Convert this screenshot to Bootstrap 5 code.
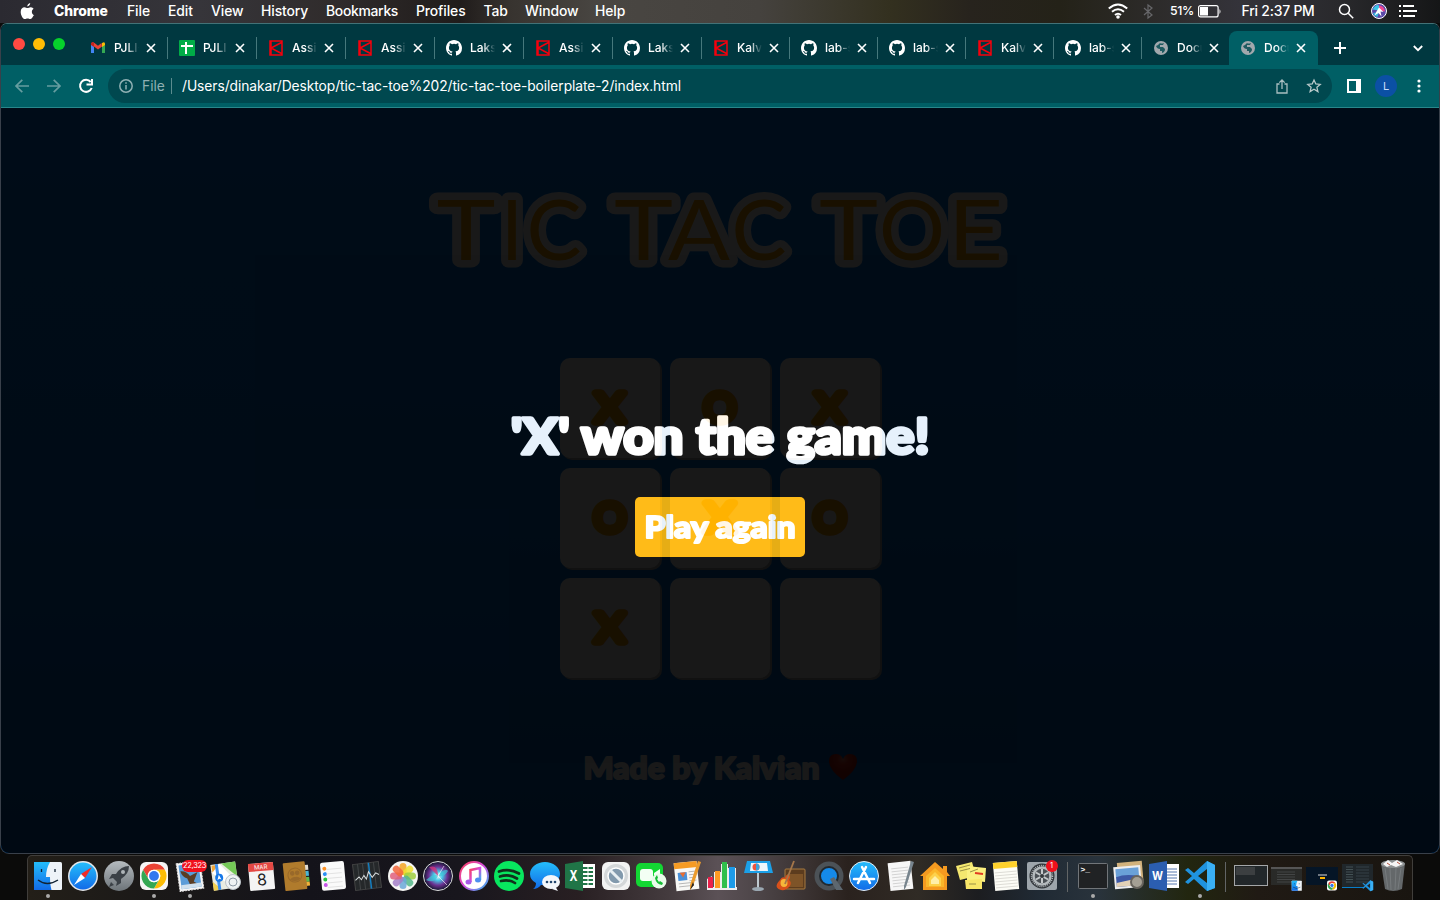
<!DOCTYPE html>
<html lang="en">
<head>
<meta charset="utf-8">
<title>Tic Tac Toe</title>
<link rel="stylesheet" href="https://cdn.jsdelivr.net/npm/bootstrap@5.3.0/dist/css/bootstrap.min.css">
<style>
body{width:1440px;height:900px;overflow:hidden;background:#0b0b0a;font-family:Inter,"Liberation Sans",sans-serif;color:#fff}
svg{display:block;flex:none;overflow:visible}
.menubar{height:23px;padding:0 0 1px 20px;font-size:13.9px;font-weight:500;line-height:22px;background:linear-gradient(90deg,#2b2a31 0,#36353a 200px,#302c2c 330px,#201c1b 460px,#37332f 510px,#494642 600px,#45423e 760px,#33301f 890px,#27231d 970px,#242218 1060px,#34333a 1240px,#29292c 1340px,#151617 1440px)}
.menubar b{font-weight:800}
.browser{height:831px;background:#000;border:1px solid #437277;border-color:#437277 #39404a #39404a;border-radius:7px 7px 9px 9px;overflow:hidden}
.tabstrip{height:41px;background:#003840;padding-left:12px}
.lights{width:66px;gap:8px;height:40px}
.lights i{width:12px;height:12px;border-radius:50%}
.tab{height:34px;margin-top:7px;padding-left:11px;font-size:12px;font-weight:500}
.tab .ttl{width:26px;margin-left:8px;overflow:hidden;white-space:nowrap;-webkit-mask-image:linear-gradient(90deg,#000 50%,transparent 96%)}
.tab .cls{margin-left:7px}
.tab.split{border-right:1px solid transparent;border-image:linear-gradient(transparent 7px,#46787c 7px,#46787c 27px,transparent 27px) 1}
.tab.on{background:#005f65;border-radius:8px 8px 0 0}
.toolbar{height:43px;background:#005f65;border-bottom:1px solid #28878b}
.omni{width:1224px;height:34px;border-radius:17px;background:#00484f;font-size:13.8px}
.vline{width:1px;height:16px;background:#5c8c8f}
.avatar-l{width:22px;height:22px;border-radius:50%;background:#0b50a4;color:#c9defa;font-size:11px;line-height:22px;text-align:center}
.page{height:745px;background:linear-gradient(#0078f0 0,#0076e0 45%,#0060c0 100%);position:relative;font-family:Lato,sans-serif;font-weight:900}
.board{display:grid;grid-template-columns:repeat(3,100px);gap:10px}
.cell{height:100px;border-radius:10px;background:#fff;box-shadow:2px 2px 0 #b4b4b4}
.veil{position:absolute;inset:0;background:#000;opacity:.9}
.again{width:170px;height:60px;border-radius:5px;background:#ffb400}
.dockbar{height:46px;margin:1px 27px 0;padding-left:2px;border:1px solid #403e3b;border-bottom:0;border-radius:5px 5px 0 0;background:linear-gradient(90deg,#231f18 0,#1b1918 120px,#14131a 280px,#18161d 430px,#281f22 550px,#443b3e 640px,#5b5156 690px,#4d4548 730px,#2a221e 820px,#302b25 890px,#1c1d20 950px,#202a34 1010px,#29333c 1070px,#22260f 1160px,#201a14 1230px,#191510 100%)}
.app{width:35.5px;height:44px;position:relative;padding-top:4px}
.app svg{width:32px;height:32px;margin-left:1.5px}
.app.run::after{content:"";position:absolute;left:15.500px;bottom:2px;width:4px;height:4px;border-radius:50%;background:#aaa}
.dsep{width:16px;height:44px;padding:6px 0 0 7px}
.dsep::before{content:"";display:block;width:1px;height:30px;background:#626566}
.pill{position:absolute;background:#f0101c;color:#fff;text-align:center;border-radius:7px;z-index:2;font-size:7.5px;line-height:12px;height:12px}
</style>
</head>
<body>
<svg width="0" height="0" class="position-absolute"><defs>
<linearGradient id="blu" x2="0" y2="1"><stop stop-color="#24bdfb"/><stop offset="1" stop-color="#126be8"/></linearGradient>
<linearGradient id="gry" x2="0" y2="1"><stop stop-color="#b5bbbf"/><stop offset="1" stop-color="#6d7479"/></linearGradient>
<linearGradient id="pnk" x2="1" y2="1"><stop stop-color="#fa4059"/><stop offset=".5" stop-color="#d44be0"/><stop offset="1" stop-color="#2ebcf0"/></linearGradient>
<radialGradient id="sir"><stop stop-color="#fff"/><stop offset=".3" stop-color="#48c9e8"/><stop offset=".65" stop-color="#6b2f91"/><stop offset="1" stop-color="#11172c"/></radialGradient>
<radialGradient id="hrt" cy=".2"><stop stop-color="#f0705c"/><stop offset=".4" stop-color="#e02a1c"/><stop offset="1" stop-color="#b8140c"/></radialGradient>
<g id="chr"><circle cx="16" cy="16" r="12.6" fill="#fff"/><path d="M5.1 9.7A12.6 12.6 0 0 1 26.9 9.7H16a6.3 6.3 0 0 0-5.5 9.4z" fill="#ea4335"/><path d="M26.9 9.7A12.6 12.6 0 0 1 16 28.6l5.5-9.4A6.3 6.3 0 0 0 16 9.7z" fill="#fbbc05"/><path d="M16 28.6A12.6 12.6 0 0 1 5.1 9.7l5.4 9.4a6.3 6.3 0 0 0 11 0z" fill="#34a853"/><circle cx="16" cy="16" r="6.2" fill="#fff"/><circle cx="16" cy="16" r="4.9" fill="#3478ee"/></g>
<g id="fnd"><rect x="2" y="2" width="28" height="28" rx="1.5" fill="#eef3f8"/><path d="M2 2h16q-4 7-4 15h4q0 8 1.5 13H2z" fill="url(#blu)"/><path d="M6 20q9 7 20 0M9.500 9v3M23 9v3" fill="none" stroke="#123" stroke-width="1.3"/></g>
<g id="vsc"><path d="M23 1l8 4v23l-8 3L10 19l-6 5-3-2 7-6-7-6 3-2 6 5zM23 9l-9 7 9 7z" fill="#1f93df"/><path d="M23 1l8 4v23l-8 3z" fill="#3ab0f5"/></g>
<symbol id="gh" viewBox="0 0 16 16"><path fill="#fff" d="M8 0C3.58 0 0 3.58 0 8c0 3.54 2.29 6.53 5.47 7.59.4.07.55-.17.55-.38 0-.19-.01-.82-.01-1.49-2.01.37-2.53-.49-2.69-.94-.09-.23-.48-.94-.82-1.13-.28-.15-.68-.52-.01-.53.63-.01 1.08.58 1.23.82.72 1.21 1.87.87 2.33.66.07-.52.28-.87.51-1.07-1.78-.2-3.64-.89-3.64-3.95 0-.87.31-1.59.82-2.15-.08-.2-.36-1.02.08-2.12 0 0 .67-.21 2.2.82a7.500 7.500 0 0 1 4 0c1.530-1.040 2.200-.82 2.200-.82.44 1.100.16 1.920.08 2.120.51.56.82 1.270.82 2.150 0 3.070-1.870 3.750-3.650 3.950.29.25.54.73.54 1.480 0 1.070-.01 1.930-.01 2.200 0 .21.15.46.55.38A8.010 8.010 0 0 0 16 8c0-4.420-3.580-8-8-8z"/></symbol>
<symbol id="kv" viewBox="0 0 16 16"><path d="M2 1h12v14H2zM13.500 2.500L3 8l10.500 5.500M3 1v14" fill="none" stroke="#f5000c" stroke-width="1.500"/></symbol>
<symbol id="gm" viewBox="0 0 16 16"><path d="M1 4v9h3V6z" fill="#4285f4"/><path d="M12 6v7h3V4z" fill="#34a853"/><path d="M1 4q1-3 3.500-1L8 5.700 11.500 3 12 6.500 8 9.600 4 6.500z" fill="#ea4335"/><path d="M1 4q0-2 2-2l1 1v4L1 5z" fill="#c5221f"/><path d="M12 3q3-2 3 1v1l-3 2z" fill="#fbbc04"/></symbol>
<symbol id="sh" viewBox="0 0 16 16"><rect width="16" height="16" rx="1" fill="#00ac47"/><path d="M6 2h2v12H6zM2 5h12v2H2z" fill="#fff"/></symbol>
<symbol id="gl" viewBox="0 0 16 16"><circle cx="8" cy="8" r="7" fill="#a1a8ad"/><path d="M3 6q1 3 4 3v2h2v2q3-1 3-4l-2-2H7V5h3l1-2q-3 1-4 0L5 5z" fill="#1d5a60"/></symbol>
</defs></svg>

<header class="menubar d-flex align-items-center text-nowrap">
<svg width="15" height="17" viewBox="0 0 15 17" style="margin-right:19px"><path fill="#fff" d="M10.200 0c.1 1.700-1.300 3.300-2.900 3.400C7.200 1.800 8.600.2 10.200 0zM13.500 12.500c-.8 1.800-2 3.500-3.200 3.500s-1.500-.6-2.700-.6-1.600.6-2.700.6C2.800 16 .7 12 .7 8.900.7 5.900 2.500 4.300 4.500 4.300c1.200 0 2.200.8 3 .8s2-.9 3.400-.8c1.300.1 2.100.6 2.700 1.500-2.600 1.700-2.200 5.500.7 6.600z"/></svg>
<div id="menus" class="d-flex"></div>
<div class="d-flex align-items-center ms-auto" style="width:332px">
<svg width="20" height="16" viewBox="0 0 20 16" fill="none" stroke="#fff" stroke-width="2"><path d="M.8 5.500Q10-2.500 19.200 5.500M4 8.800q6-5 12 0M7 12q3-2.500 6 0"/><circle cx="10" cy="14" r=".8" fill="#fff"/></svg>
<svg width="10" height="15" viewBox="0 0 10 15" style="margin-left:15px" fill="none" stroke="#67676a" stroke-width="1.200"><path d="M1 4l8 7-4 3V1l4 3-8 7"/></svg>
<span style="margin-left:17px;font-size:12.300px;width:28px;letter-spacing:-.4px">51%</span>
<svg width="24" height="13" viewBox="0 0 24 13"><rect x=".6" y=".6" width="19.500" height="11.300" rx="2" fill="none" stroke="#fff" stroke-width="1.200"/><rect x="2" y="2" width="8" height="8.500" fill="#fff"/><path d="M21.500 4q2 2.300 0 5z" fill="#fff"/></svg>
<span style="margin-left:19.500px;width:96px;letter-spacing:-.2px">Fri 2:37 PM</span>
<svg width="16" height="16" viewBox="0 0 16 16" fill="none" stroke="#fff" stroke-width="1.500"><circle cx="6.500" cy="6.500" r="5"/><path d="M10.200 10.200l5 5"/></svg>
<svg width="16" height="16" viewBox="0 0 32 32" style="margin-left:17px"><circle cx="16" cy="16" r="15" fill="#5b49a8" stroke="#fff" stroke-width="2"/><path d="M3 13q7-12 13-8v10z" fill="#3bc6e8"/><path d="M16 5q10 0 12 12l-12-2z" fill="#ee4692"/><path d="M4 20q2 7 9 8l3-10z" fill="#35b6dc"/><path d="M16 9l9 9-6-1 2 10-6-7-8 5 4-8z" fill="#fff"/></svg>
<svg width="18" height="12" viewBox="0 0 18 12" style="margin-left:12px" stroke="#fff" stroke-width="1.800"><path d="M0 1h2M4 1h11M0 6h2M4 6h14M0 11h2M4 11h12"/></svg>
</div>
</header>

<main class="browser">
<div class="tabstrip d-flex">
<div class="lights d-flex align-items-center"><i style="background:#ff4a42"></i><i style="background:#ffbd05"></i><i style="background:#06d32c"></i></div>
<div id="tabs" class="d-flex"></div>
<svg width="12" height="12" viewBox="0 0 12 12" style="margin:18px 0 0 16px" stroke="#fff" stroke-width="2"><path d="M6 0v12M0 6h12"/></svg>
<svg class="ms-auto" width="10" height="7" viewBox="0 0 10 7" style="margin:21px 16px 0 0" fill="none" stroke="#fff" stroke-width="1.800"><path d="M.8 1L5 5.200 9.200 1"/></svg>
</div>
<div class="toolbar d-flex align-items-center">
<svg width="14" height="14" viewBox="0 0 14 14" style="margin-left:14px" fill="none" stroke="#669da0" stroke-width="1.700"><path d="M14 7H1M7.300.8L1 7l6.300 6.200"/></svg>
<svg width="14" height="14" viewBox="0 0 14 14" style="margin-left:18px" fill="none" stroke="#669da0" stroke-width="1.700"><path d="M0 7h13M6.700.8L13 7l-6.300 6.200"/></svg>
<svg width="14" height="14" viewBox="0 0 14 14" style="margin:0 15px 0 18px" fill="none" stroke="#fff" stroke-width="2"><path d="M11.700 3A6 6 0 1 0 12.700 9M13 0v5.500H7.500"/></svg>
<div class="omni d-flex align-items-center">
<svg width="14" height="14" viewBox="0 0 14 14" style="margin-left:11px" fill="none" stroke="#8fb0b3" stroke-width="1.500"><circle cx="7" cy="7" r="6.200"/><path d="M7 6v4.500M7 3.200v1.500"/></svg>
<span style="margin-left:9px;width:29px;color:#8fb0b3">File</span><span class="vline"></span>
<svg width="500" height="20" viewBox="0 0 500 20" style="margin-left:10px"><text x="0" y="14.500" font-size="13.800" fill="#fff" textLength="499">/Users/dinakar/Desktop/tic-tac-toe%202/tic-tac-toe-boilerplate-2/index.html</text></svg>
<svg class="ms-auto" width="12" height="15" viewBox="0 0 12 15" fill="none" stroke="#a9bfc1" stroke-width="1.300"><path d="M3.500 5H1v9h10V5H8.500M6 10V1M3.300 3.600L6 1l2.700 2.600"/></svg>
<svg width="14" height="14" viewBox="0 0 14 14" style="margin:0 11px 0 19px" fill="none" stroke="#b8c9ca" stroke-width="1.300"><path d="M7 1l1.800 4 4.400.4-3.300 2.900 1 4.300L7 10.300l-3.900 2.300 1-4.300L.8 5.400l4.400-.4z"/></svg>
</div>
<svg width="14" height="14" viewBox="0 0 14 14" style="margin-left:15px"><path fill="#fff" d="M0 0h14v14H0zM2 2v10h7V2z" fill-rule="evenodd"/></svg>
<div class="avatar-l" style="margin-left:14px">L</div>
<svg width="4" height="14" viewBox="0 0 4 14" style="margin-left:19.500px" fill="#fff"><circle cx="2" cy="2" r="1.600"/><circle cx="2" cy="7" r="1.600"/><circle cx="2" cy="12" r="1.600"/></svg>
</div>
<section class="page">
<div class="d-flex flex-column align-items-center">
<svg width="600" height="100" viewBox="420 180 600 100" style="margin-top:72px"><text id="title" y="260" font-size="83" font-weight="400" fill="#ffa500" stroke="#fff" stroke-width="15" stroke-linejoin="round" paint-order="stroke"></text></svg>
<div class="board" style="margin-top:78px" id="board"></div>
<svg width="280" height="50" viewBox="580 745 280 50" style="margin-top:67px"><text x="583.500" y="779" font-size="31" fill="#fff" stroke="#fff" stroke-width="2" stroke-linejoin="round" textLength="236" lengthAdjust="spacingAndGlyphs">Made by Kalvian</text><path d="M843 780q-14-10-14-19 0-7 7-7 5 0 7 5 2-5 7-5 7 0 7 7 0 9-14 19z" fill="url(#hrt)"/></svg>
</div>
<div class="veil d-flex flex-column align-items-center">
<svg width="430" height="65" viewBox="505 410 430 65" style="margin-top:302px"><text x="511" y="454" font-size="49" fill="#fff" stroke="#fff" stroke-width="3.500" stroke-linejoin="round" textLength="418.500" lengthAdjust="spacingAndGlyphs">'X' won the game!</text></svg>
<div class="again" style="margin-top:22px"><svg width="170" height="60" viewBox="635 497 170 60"><text x="644.500" y="537.500" font-size="30" fill="#fff" stroke="#fff" stroke-width="2" stroke-linejoin="round" textLength="151" lengthAdjust="spacingAndGlyphs">Play again</text></svg></div>
</div>
</section>
</main>
<footer class="dockbar d-flex" id="dock"></footer>

<script src="https://cdn.jsdelivr.net/npm/bootstrap@5.3.0/dist/js/bootstrap.bundle.min.js"></script>
<script>
const $=id=>document.getElementById(id);
$('title').innerHTML=[['T',436.5,59],['I',501,22],['C',526.5,55],['T',614,59],['A',668,62],['C',731.5,55],['T',819,59],['O',879,66],['E',948,55]].map(([c,x,w])=>`<tspan x="${x}" textLength="${w}" lengthAdjust="spacingAndGlyphs">${c}</tspan>`).join('');
$('menus').innerHTML=[['<b>Chrome</b>',73],['File',41],['Edit',43],['View',50],['History',65],['Bookmarks',90],['Profiles',67.500],['Tab',41.500],['Window',70],['Help',40]].map(([t,w])=>`<span style="width:${w}px;letter-spacing:${t=='Bookmarks'?-.3:-.1}px">${t}</span>`).join('');
$('tabs').innerHTML=[['gm','PJLI-',89],['sh','PJLI',89],['kv','Assig',89],['kv','Assig',89],['gh','Laks',89],['kv','Assig',89],['gh','Laks',89],['kv','Kalv',88],['gh','lab-s',88],['gh','lab-s',88],['kv','Kalv',88],['gh','lab-s',88],['gl','Docu',87],['gl','Docu',89]].map(([i,t,w],n)=>`<div class="tab d-flex align-items-center ${n==13?'on':n<12?'split':''}" style="width:${w}px"><svg width="16" height="16"><use href="#${i}"/></svg><span class="ttl">${t}</span><svg class="cls" width="8" height="8" viewBox="0 0 8 8" stroke="#fff" stroke-width="1.600"><path d="M0 0l8 8M8 0L0 8"/></svg></div>`).join('');
const mark=(t,w)=>`<text x="${50-w/2}" y="64" font-size="41" font-weight="400" fill="#ffa500" stroke="#ffa500" stroke-width="7.5" stroke-linejoin="round" textLength="${w}" lengthAdjust="spacingAndGlyphs">${t}</text>`;
const X=mark('X',30),O=mark('O',33);
$('board').innerHTML=[X,O,X,O,X,O,X,'',''].map(m=>`<div class="cell"><svg width="100" height="100">${m}</svg></div>`).join('');
const petals=['#f6a623','#f0e02e','#a0cf3f','#55b98a','#6ba8d8','#a580c8','#e0607c','#f3673b'].map((c,i)=>`<rect x="12.500" y="3" width="7" height="12" rx="3.500" fill="${c}" opacity=".85" transform="rotate(${i*45} 16 16)"/>`).join('');
const teeth=Array.from({length:6},(_,i)=>`<path d="M16 16V9" transform="rotate(${i*60} 16 16)" stroke="#c4c9cb" stroke-width="2"/>`).join('');
const lines=(x,y,w,n,s,c)=>Array.from({length:n},(_,i)=>`<path d="M${x} ${y+i*s}h${w}" stroke="${c}" stroke-width=".8"/>`).join('');
const apps=[
['<use href="#fnd"/>',1],
['<circle cx="16" cy="16" r="15" fill="#e5e8eb"/><circle cx="16" cy="16" r="13.500" fill="url(#blu)"/><path d="M25 7L14 14l4 4z" fill="#f02c28"/><path d="M7 25l7-11 4 4z" fill="#fff"/>'],
['<circle cx="16" cy="16" r="15" fill="url(#gry)"/><path d="M26 6q-8 0-13 8H9l-3 5 4-1 4 4-1 4 5-3v-4q8-5 8-13zM8 22l-2 5 5-2z" fill="#3b4147"/><circle cx="20" cy="12" r="2" fill="#aeb4b8"/>'],
['<rect x="2" y="2" width="28" height="28" rx="6" fill="#f5f5f5"/><use href="#chr"/>',1],
['<g transform="rotate(-8 16 16)"><rect x="4" y="2" width="24" height="28" fill="#f6f6f6" stroke="#ddd" stroke-dasharray="2 1"/><rect x="6" y="4" width="20" height="24" fill="#5b9cd8"/><path d="M7 10q6 0 9 6l8-3-5 9 4 3h-8l-2-7q-5-2-6-8z" fill="#5a3d24"/><path d="M6 24l20 0v4H6z" fill="#cfe0ee"/></g>',1,'<span class="pill" style="left:10px;top:4px;width:25px;letter-spacing:-.3px">22,323</span>'],
['<g transform="rotate(-8 16 16)"><rect x="3" y="3" width="25" height="26" fill="#e9ece1"/><path d="M14 3h14v15z" fill="#75c957"/><path d="M3 11l9-8 16 22v4h-4z" fill="#fff"/><path d="M4 4h7l-7 7z" fill="#f2a83c"/><path d="M3 20l8 9H3z" fill="#f0d04f"/><path d="M9 3v26" stroke="#3b8ff0" stroke-width="3"/><circle cx="10" cy="17" r="4" fill="#1678e8"/><path d="M10 14l2 5-2-1-2 1z" fill="#fff"/></g><circle cx="24" cy="22" r="7.500" fill="#eef2f3" stroke="#bcc3c8"/><circle cx="24" cy="22" r="4" fill="none" stroke="#8e9ba6"/>'],
['<g transform="rotate(-5 16 16)"><rect x="4" y="3" width="25" height="27" rx="1" fill="#f4f4f4"/><path d="M4 3h25v8H4z" fill="#e54843"/><text x="16.500" y="9.300" font-size="6" text-anchor="middle" fill="#fff">MAR</text><text x="16.500" y="25.500" font-size="16" text-anchor="middle" fill="#222">8</text></g>'],
['<g transform="rotate(-6 16 16)"><path d="M25 6h4v5h-4z" fill="#e3dcd0"/><path d="M25 12h4v5h-4z" fill="#49b4d5"/><path d="M25 18h4v5h-4z" fill="#61b94e"/><path d="M25 23h4v4h-4z" fill="#f0b23a"/><rect x="4" y="2" width="22" height="28" rx="1" fill="#b07b2c"/><g fill="#99692a"><circle cx="15" cy="15" r="7" fill="none" stroke="#99692a"/><circle cx="12.500" cy="13" r="2.300"/><circle cx="17.500" cy="13" r="2.300"/><path d="M9.500 19q3-3 5.500-2 3-1 5.500 2-5 4-11 0z"/></g></g>'],
['<g transform="rotate(-5 16 16)"><rect x="5" y="2" width="24" height="28" rx="2" fill="#fafafa"/>'+lines(11,9,15,5,4.5,'#ddd')+'<circle cx="9" cy="8" r="2" fill="#ff9326"/><circle cx="9" cy="13.500" r="2" fill="#2a8ff5"/><circle cx="9" cy="19" r="2" fill="#28c441"/><circle cx="9" cy="24.500" r="2" fill="#c656e8"/></g>'],
['<g transform="rotate(-7 16 16)"><rect x="3" y="3" width="26" height="26" fill="#25282a" stroke="#444"/><path d="M8 3v26M13 3v26M18 3v26M24 3v26" stroke="#414446"/><path d="M19 3v26" stroke="#147dc0" stroke-width="1.500"/><path d="M4 19l4-3 2 3 3-4 2 4 3-7 3 6 4-4 3 2" fill="none" stroke="#d9dedf"/></g>'],
['<circle cx="16" cy="16" r="15" fill="#f6f6f4"/>'+petals],
['<circle cx="16" cy="16" r="14.500" fill="url(#sir)" stroke="#ddd"/><path d="M4 20q9-8 12-4 7-9 10-5-4 7-10 5-4 8-12 4z" fill="#3fc8d9" opacity=".7"/><path d="M16 16L7 7q9-3 9 9z" fill="#cf347e" opacity=".8"/><path d="M16 16l9 9M16 16l6-10" stroke="#fff" opacity=".6"/>'],
['<circle cx="16" cy="16" r="14" fill="#fff" stroke="url(#pnk)" stroke-width="2"/><path d="M12.500 22V10l9.500-2v12" fill="none" stroke="url(#pnk)" stroke-width="2.500"/><ellipse cx="10.500" cy="22" rx="3" ry="2.500" fill="#a95ae8"/><ellipse cx="20" cy="20" rx="3" ry="2.500" fill="#4d8ff0"/>'],
['<circle cx="16" cy="16" r="15" fill="#08e65f"/><path d="M6 11.500q10-3.500 20 2M7 16.500q9-3 17 2M8 21q8-2 14 2" fill="none" stroke="#11301c" stroke-width="2.700" stroke-linecap="round"/>'],
['<path d="M16 2C8 2 1 7 1 14q0 6 6 9 0 4-3 6 5 0 8-4C23 26 31 21 31 14S24 2 16 2z" fill="url(#blu)"/><ellipse cx="22" cy="22" rx="9" ry="7" fill="#f4f7fb"/><path d="M26 26l3 5-6-2z" fill="#f4f7fb"/><g fill="#23466e"><circle cx="18" cy="22" r="1.300"/><circle cx="22" cy="22" r="1.300"/><circle cx="26" cy="22" r="1.300"/></g>'],
['<path d="M17 4h14v24H17z" fill="#fff"/><path d="M18 8h11M18 12h11M18 16h11M18 20h11M18 24h11" stroke="#207547" stroke-width="2"/><path d="M24 5v22" stroke="#fff"/><path d="M1 4l18-3v30L1 28z" fill="#207547"/><text x="9.500" y="21" text-anchor="middle" font-size="14" font-weight="700" fill="#fff" textLength="8" lengthAdjust="spacingAndGlyphs">X</text>'],
['<rect x="2" y="2" width="28" height="28" rx="6" fill="#f3f3f3"/><circle cx="16" cy="16" r="12" fill="#d4d7d9"/><circle cx="16" cy="16" r="8" fill="#8299ad" stroke="#fff" stroke-width="1.500"/><path d="M10 10l12 12" stroke="#e8eef2" stroke-width="3"/>'],
['<rect x="1" y="3" width="27" height="24" rx="5" fill="#13d633"/><rect x="5" y="9" width="13" height="12" rx="3" fill="#f3fff4"/><path d="M19 13l6-4v9l-6-3z" fill="#f3fff4"/><circle cx="24" cy="21" r="7.500" fill="#eafbea"/><path d="M20 18q1 6 7 7l1-2-3-2-1 1-2-3 1-1-1-3z" fill="#15bd35"/>'],
['<g transform="rotate(-6 16 16)"><rect x="4" y="2" width="23" height="28" fill="#f8f8f5"/><path d="M4 2h23v6H4z" fill="#f59b24"/><path d="M7 12h9v8H7z" fill="#4a91d8"/><path d="M9 12h6l-3 5z" fill="#e76e32"/>'+lines(18,12,7,4,3,'#aaa')+lines(7,23,15,2,3,'#aaa')+'</g><path d="M27 1l3 1-8 24-3 4v-5z" fill="#eb9b2c"/><path d="M22 22l-3 8 4-5z" fill="#222"/>'],
['<path d="M1 19l5-3v14H1zM8 12h7v18H8zM15 4h7v26h-7zM22 8h8v22h-8z" fill="#eee"/><path d="M1 27h30v3H1z" fill="#eee"/><path d="M2 17h5v11H2z" fill="#e9214b"/><path d="M9 11h5v17H9z" fill="#ff9b22"/><path d="M16 2h5v26h-5z" fill="#30bf4c"/><path d="M23 7h6v21h-6z" fill="#1d9be8"/>'],
['<path d="M5 1h23l3 12H2z" fill="#1ba0e8"/><path d="M9 3h16l1 8H8z" fill="#edf6fb"/><circle cx="14" cy="7" r="3.500" fill="#ef543e"/><path d="M14 3.500a3.500 3.500 0 0 1 0 7z" fill="#3ca2db"/><path d="M16 13v15" stroke="#bec9d0" stroke-width="2"/><ellipse cx="16" cy="29" rx="6" ry="2" fill="#9aa7b1"/>'],
['<rect x="8" y="9" width="20" height="20" rx="1" fill="#5c3c1e" stroke="#a77a40"/><path d="M10 14h16v13H10z" fill="#7e5428"/><path d="M3 20q2-4 5-2 1-4 4-3 2 2 0 5 3 2 1 6-4 5-9 4-6-2-4-6 1-2 3-4z" fill="#d8501a"/><ellipse cx="7" cy="23" rx="3.500" ry="4" fill="#f6b63a"/><path d="M8 24L17 1" stroke="#a5774a" stroke-width="1.800"/>'],
['<circle cx="16" cy="16" r="14.500" fill="#4c5257"/><circle cx="16" cy="16" r="9" fill="#158ae9" stroke="#22292f" stroke-width="2"/><path d="M17 19l4-2 9 13h-7z" fill="#5d676f"/>'],
['<circle cx="16" cy="16" r="14.500" fill="url(#blu)" stroke="#e7eff5"/><path d="M18 7L10 23M14 7l8 16M6 19h13M22 19h4" fill="none" stroke="#fff" stroke-width="2.500" stroke-linecap="round"/>'],
['<g transform="rotate(-6 16 16)"><rect x="5" y="2" width="23" height="28" fill="#f7f7f7"/>'+lines(8,8,17,7,3,'#ccc')+'</g><path d="M27 1l3 1-8 25-2 3v-4z" fill="#77848d"/>'],
['<path d="M16 2L1 16h3v14h24V16h3l-3-4V6h-4v3z" fill="#f59a20"/><path d="M16 8l-9 8v11h18V16z" fill="#fbb62a"/><path d="M16 12l-6 6v8h12v-8z" fill="#fdd24c"/><path d="M16 16l-4 4v4h8v-4z" fill="#fff0aa"/>'],
['<path d="M1 6l16-4 4 14-16 4z" fill="#f4e76f"/><path d="M12 6l19 2-1 14-18-2z" fill="#fbf080"/><path d="M10 20l17-1v10H11z" fill="#f8e668"/><path d="M4 8l11-3M5 11l10-2.500M15 12l8-3M14 24h7" stroke="#9a9045"/><path d="M20 13l8 1" stroke="#e13b22" stroke-width="2"/>'],
['<g transform="rotate(-5 16 16)"><rect x="4" y="2" width="24" height="28" fill="#fcfcf6"/><path d="M4 2h24v6H4z" fill="#fed12d"/>'+lines(5,12,22,6,3,'#d6d5cf')+'</g>'],
['<rect x="1" y="2" width="30" height="28" rx="2" fill="#9da5ab"/><circle cx="16" cy="16" r="12.500" fill="#30353a"/><circle cx="16" cy="16" r="8.500" fill="#4b5156" stroke="#b4babd" stroke-width="2.500"/><circle cx="16" cy="16" r="10.500" fill="none" stroke="#b4babd" stroke-dasharray="1 1" stroke-width="1.500"/>'+teeth+'<circle cx="16" cy="16" r="2" fill="#33383c"/>',0,'<span class="pill" style="left:21.500px;top:4px;width:12px">1</span>'],
0,
['<rect x="1.500" y="3.500" width="29" height="25" rx="1" fill="#202224" stroke="#717579"/><text x="3.500" y="12" font-size="8" font-weight="700" fill="#fff" style="font-family:Liberation Mono,monospace">&gt;_</text>',1],
['<g transform="rotate(-5 16 16)"><rect x="5" y="2" width="25" height="20" fill="#d2b27c"/><rect x="1" y="6" width="27" height="22" fill="#eee"/><path d="M3 8h23v9H3z" fill="#6aa1d8"/><path d="M3 16q10-3 23 1v9H3z" fill="#3d59a5"/><path d="M3 22l15-2 8 6H3z" fill="#e2d1b6"/></g><circle cx="24" cy="22" r="6" fill="#a5a094" stroke="#68645d" stroke-width="2"/>'],
['<path d="M17 4h14v24H17z" fill="#fff"/>'+lines(19,9,10,6,3,'#2b579a')+'<path d="M1 4l18-3v30L1 28z" fill="#2b5eb0"/><text x="9.500" y="20" text-anchor="middle" font-size="12" font-weight="700" fill="#fff" textLength="11" lengthAdjust="spacingAndGlyphs">W</text>'],
['<use href="#vsc"/>',1],
0,
['<rect x="-.5" y="5.500" width="33" height="20" fill="#22272a" stroke="#a4a6a8"/>'+lines(1,8,19,4,2,'#666')],
['<rect x="0" y="7" width="31" height="18" fill="#292a28"/><path d="M0 7h31v2H0z" fill="#555"/>'+lines(6,12,18,5,2.500,'#4a4d4c')+'<use href="#fnd" transform="translate(20 20) scale(.36)"/>'],
['<rect x="0" y="7" width="32" height="18" fill="#051526"/><path d="M12 15h9" stroke="#ddd"/><path d="M14 18h5" stroke="#ffb400" stroke-width="2"/><rect x="21" y="20.500" width="10" height="10" rx="2" fill="#fff"/><use href="#chr" transform="translate(20.500 20) scale(.34)"/>'],
['<rect x="0" y="4" width="31" height="24" fill="#20272b"/>'+lines(4,7,7,7,2.500,'#4d5c60')+lines(14,7,13,6,3,'#3a484e')+'<path d="M0 27.500h22" stroke="#087dc8" stroke-width="1"/><use href="#vsc" transform="translate(20 20) scale(.36)"/>'],
['<path d="M4 3h24l-3 26q-9 4-17 0z" fill="#64686a"/><path d="M8 8l3 21M13 8l1 22M19 8l-1 22M24 8l-3 21" stroke="#92979a" opacity=".4"/><ellipse cx="16" cy="4" rx="12" ry="4" fill="#8d9192"/><path d="M6 4l5-4 4 3 5-3 6 4-7 3-5-2-4 2z" fill="#f5f5f5"/><path d="M10 3l3 2M20 2l3 2" stroke="#b6533e"/>']];
$('dock').innerHTML=apps.map(a=>a?`<div class="app ${a[1]?'run':''}"><svg viewBox="0 0 32 32">${a[0]}</svg>${a[2]||''}</div>`:'<div class="dsep"></div>').join('');
</script>
</body>
</html>
